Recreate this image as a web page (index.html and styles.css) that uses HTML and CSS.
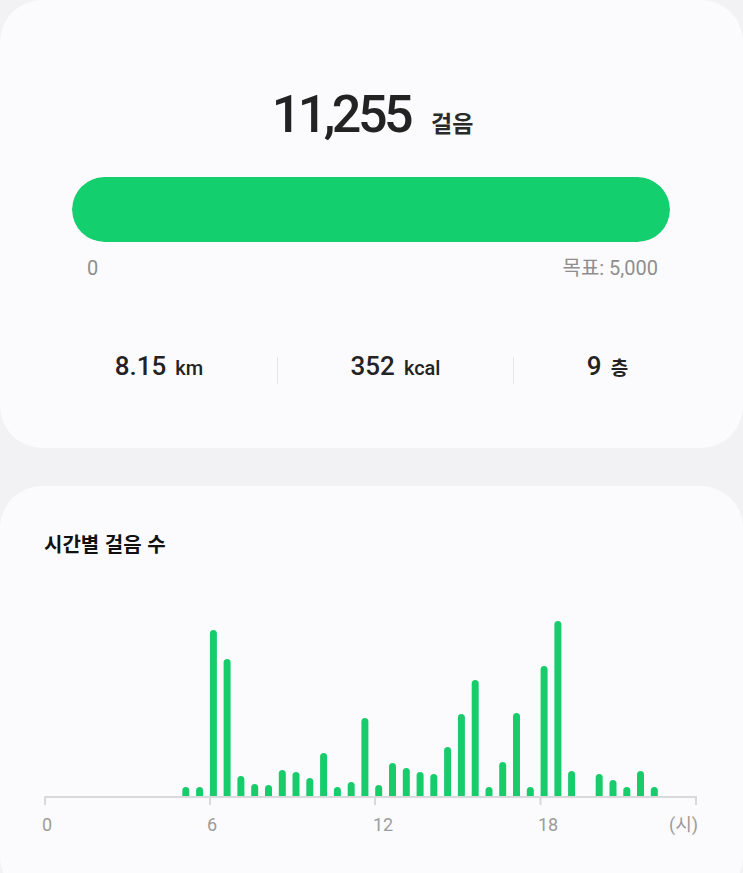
FILE: index.html
```html
<!DOCTYPE html>
<html lang="ko">
<head>
<meta charset="utf-8">
<title>걸음</title>
<link rel="stylesheet" href="styles.css">
</head>
<body>
<main class="page">
  <section class="card summary">
    <div class="total">
      <span class="total-num">11,255</span>
      <span class="total-unit">걸음</span>
    </div>
    <div class="progress"><div class="progress-fill" style="width:100%"></div></div>
    <div class="progress-labels">
      <span>0</span>
      <span>목표: 5,000</span>
    </div>
    <div class="stats">
      <div class="stat"><span class="stat-num">8.15</span><span class="stat-unit">km</span></div>
      <div class="divider"></div>
      <div class="stat"><span class="stat-num">352</span><span class="stat-unit">kcal</span></div>
      <div class="divider"></div>
      <div class="stat"><span class="stat-num">9</span><span class="stat-unit kr">층</span></div>
    </div>
  </section>

  <section class="card hourly">
    <h2 class="hourly-title">시간별 걸음 수</h2>
    <svg class="chart" width="743" height="250" viewBox="0 0 743 250">
      <defs>
        <clipPath id="plot"><rect x="0" y="0" width="743" height="207"/></clipPath>
      </defs>
      <g class="bars" clip-path="url(#plot)">
        <rect x="182.3" y="198" width="7" height="17" rx="3.5"/>
        <rect x="196.1" y="198" width="7" height="17" rx="3.5"/>
        <rect x="209.9" y="41" width="7" height="174" rx="3.5"/>
        <rect x="223.6" y="70" width="7" height="145" rx="3.5"/>
        <rect x="237.4" y="187" width="7" height="28" rx="3.5"/>
        <rect x="251.2" y="195" width="7" height="20" rx="3.5"/>
        <rect x="265.0" y="196" width="7" height="19" rx="3.5"/>
        <rect x="278.8" y="181" width="7" height="34" rx="3.5"/>
        <rect x="292.5" y="183" width="7" height="32" rx="3.5"/>
        <rect x="306.3" y="189" width="7" height="26" rx="3.5"/>
        <rect x="320.1" y="164" width="7" height="51" rx="3.5"/>
        <rect x="333.9" y="198" width="7" height="17" rx="3.5"/>
        <rect x="347.7" y="193" width="7" height="22" rx="3.5"/>
        <rect x="361.4" y="129" width="7" height="86" rx="3.5"/>
        <rect x="375.2" y="196" width="7" height="19" rx="3.5"/>
        <rect x="389.0" y="174" width="7" height="41" rx="3.5"/>
        <rect x="402.8" y="179" width="7" height="36" rx="3.5"/>
        <rect x="416.6" y="183" width="7" height="32" rx="3.5"/>
        <rect x="430.3" y="185" width="7" height="30" rx="3.5"/>
        <rect x="444.1" y="158" width="7" height="57" rx="3.5"/>
        <rect x="457.9" y="125" width="7" height="90" rx="3.5"/>
        <rect x="471.7" y="91" width="7" height="124" rx="3.5"/>
        <rect x="485.5" y="198" width="7" height="17" rx="3.5"/>
        <rect x="499.2" y="173" width="7" height="42" rx="3.5"/>
        <rect x="513.0" y="124" width="7" height="91" rx="3.5"/>
        <rect x="526.8" y="198" width="7" height="17" rx="3.5"/>
        <rect x="540.6" y="77" width="7" height="138" rx="3.5"/>
        <rect x="554.4" y="32" width="7" height="183" rx="3.5"/>
        <rect x="568.1" y="182" width="7" height="33" rx="3.5"/>
        <rect x="595.7" y="185" width="7" height="30" rx="3.5"/>
        <rect x="609.5" y="191" width="7" height="24" rx="3.5"/>
        <rect x="623.3" y="198" width="7" height="17" rx="3.5"/>
        <rect x="637.0" y="182" width="7" height="33" rx="3.5"/>
        <rect x="650.8" y="198" width="7" height="17" rx="3.5"/>
      </g>
      <g class="axis">
        <line x1="44.5" y1="208" x2="697" y2="208"/>
        <line x1="45" y1="208" x2="45" y2="216"/>
        <line x1="210" y1="208" x2="210" y2="216"/>
        <line x1="375" y1="208" x2="375" y2="216"/>
        <line x1="540.5" y1="208" x2="540.5" y2="216"/>
        <line x1="696" y1="208" x2="696" y2="216"/>
      </g>
      <g class="tick-labels">
        <text x="42" y="242">0</text>
        <text x="207" y="242">6</text>
        <text x="373" y="242">12</text>
        <text x="538" y="242">18</text>
        <text x="698" y="242" text-anchor="end">(시)</text>
      </g>
    </svg>
  </section>
</main>
</body>
</html>
```

FILE: styles.css
```css
* { box-sizing: border-box; }

html, body {
  margin: 0;
  padding: 0;
  background: #f2f2f4;
}

body {
  font-family: Roboto, "Noto Sans CJK KR", sans-serif;
  color: #232323;
  width: 743px;
  height: 873px;
  overflow: hidden;
}

.page {
  display: flex;
  flex-direction: column;
  gap: 38px;
}

.card {
  background: #fbfbfd;
  border-radius: 42px;
}

.summary {
  padding: 89px 0 64px 0;
  display: flex;
  flex-direction: column;
}

.total {
  display: flex;
  justify-content: center;
  align-items: baseline;
  line-height: 52px;
  padding-left: 2px;
}

.total-num {
  font-size: 52px;
  font-weight: 500;
  letter-spacing: -3.5px;
}

.total-unit {
  font-family: "Noto Sans CJK KR", sans-serif;
  font-size: 23px;
  font-weight: 700;
  margin-left: 21px;
  color: #2a2a2a;
}

.progress {
  margin: 29px 73px 0 72px;
  height: 65px;
  border-radius: 33px;
  background: #e4e4e6;
  overflow: hidden;
}

.progress-fill {
  height: 100%;
  background: #13cf6d;
  border-radius: 33px;
}

.progress-labels {
  display: flex;
  justify-content: space-between;
  margin: 15px 85px 0 87px;
  font-size: 20px;
  line-height: 22px;
  color: #8e8e8e;
}

.stats {
  display: grid;
  grid-template-columns: 236px 1px 235px 1px 1fr;
  margin: 72px 42px 0 41px;
  align-items: start;
}

.stat {
  display: flex;
  justify-content: center;
  align-items: baseline;
  height: 30px;
  line-height: 30px;
}

.stat-num {
  font-size: 26px;
  font-weight: 500;
}

.stat-unit {
  font-size: 20px;
  font-weight: 500;
  margin-left: 9px;
}

.stat-unit.kr {
  font-family: "Noto Sans CJK KR", sans-serif;
  font-size: 19px;
  font-weight: 700;
}

.divider {
  width: 1px;
  height: 27px;
  margin-top: 6px;
  background: #e6e6e8;
}

.hourly {
  padding: 44px 0 60px 0;
}

.hourly-title {
  margin: 0;
  padding-left: 44px;
  font-family: "Noto Sans CJK KR", sans-serif;
  font-size: 20px;
  font-weight: 700;
  line-height: 28px;
  color: #111;
}

.chart {
  display: block;
  margin-top: 31px;
}

.bars rect {
  fill: #18cc6c;
}

.axis line {
  stroke: #d9d9db;
  stroke-width: 2;
}

.tick-labels text {
  font-family: Roboto, "Noto Sans CJK KR", sans-serif;
  font-size: 18px;
  fill: #9b9b9b;
}
```
